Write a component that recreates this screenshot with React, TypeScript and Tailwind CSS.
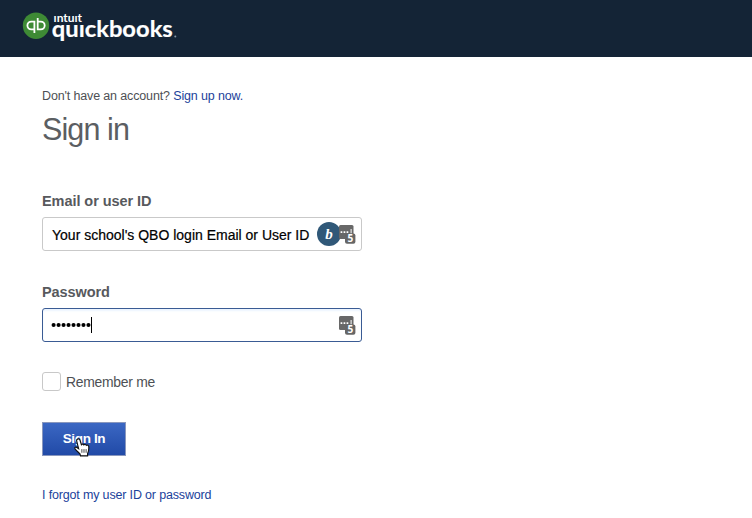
import React from "react";

function Logo() {
  return (
    <svg width="170" height="42" viewBox="0 0 170 42" role="img" aria-label="Intuit QuickBooks" className="shrink-0">
      <circle cx="14" cy="19.7" r="13.2" fill="#3e8a35" />
      <g fill="none" stroke="#fff" strokeWidth="1.8">
        <path d="M12.4 27V15.6H9.3a3.9 3.9 0 0 0 0 7.8h3.1" />
        <path d="M15.7 12V23.4h3.1a3.9 3.9 0 0 0 0-7.8h-3.1" />
      </g>
      <g fill="#fff" fontFamily="Lato, sans-serif" fontWeight="700">
        <text x="31.6" y="16.2" fontSize="11" textLength="28.5" lengthAdjust="spacingAndGlyphs">ıntuıt</text>
        <text x="29.8" y="31.2" fontSize="23.5" textLength="121" lengthAdjust="spacingAndGlyphs" stroke="#fff" strokeWidth=".2">quıckbooks</text>
      </g>
      <circle cx="153.3" cy="30.6" r="1" fill="#8996a5" />
    </svg>
  );
}

function ManagerIcon() {
  return (
    <svg width="18" height="20" viewBox="0 0 18 20" className="shrink-0">
      <rect x="0" y="0" width="14.5" height="14" rx="1.5" fill="#686868" />
      <path d="M1.6 6.2h1.7v1.7H1.6zM4.6 6.2h1.7v1.7H4.6zM7.6 6.2h1.7v1.7H7.6zM11.6 4h1v4.4h-1z" fill="#fff" />
      <rect x="6" y="8.4" width="10.4" height="10.4" rx="2" fill="#666" />
      <text x="11.3" y="17.2" textAnchor="middle" fontSize="10" fontWeight="700" fontFamily="Noto Sans, sans-serif" fill="#fff">5</text>
    </svg>
  );
}

function HandCursor() {
  return (
    <svg width="17" height="20" viewBox="0 0 16 18" preserveAspectRatio="none" className="absolute left-[31px] top-[15px]">
      <path
        d="M3.3 1C4.4.4 5.3 1 5.7 2L7 6c.7-.8 2-.6 2.3.2.8-.7 2-.4 2.3.4 1-.6 2.2 0 2.3 1.2.2 2.5-.1 4.4-1.1 6.1V16H6.1l-.5-1.7C4.1 12.8 2.3 11.5 1 9.7c-.7-1.2.7-2 1.7-1.2l1.6 1.1L2.6 3C2.3 2.1 2.5 1.4 3.3 1z"
        fill="#fff"
        stroke="#111"
        strokeWidth="1.1"
      />
      <path d="M7.4 10v3.3M9.4 10v3.3M11.4 10v3.3" stroke="#111" strokeWidth=".7" />
    </svg>
  );
}

export default function App() {
  return (
    <div className="h-[518px] w-[752px] overflow-hidden bg-white font-['Liberation_Sans',Arial,sans-serif] text-[#4d5054]">
      <header className="flex h-[57px] bg-[#142436] pl-[22px] pt-[6px]">
        <Logo />
      </header>
      <main className="flex flex-col items-start pl-[42px] whitespace-nowrap">
        <p className="mt-[31px] h-4 text-[12.5px] leading-4 tracking-[-0.14px]">
          Don't have an account? <a className="text-[#1b429b]">Sign up now.</a>
        </p>
        <h1 className="mt-[7px] h-9 text-[30.5px] leading-9 tracking-[-0.9px] text-[#5b5e62]">Sign in</h1>
        <label className="mt-[45px] h-[18px] text-[14.5px] font-bold leading-[18px] tracking-[-0.06px] text-[#57595d]">Email or user ID</label>
        <div className="mt-[7px] flex h-[34px] w-[320px] items-center rounded-[3px] border border-[#c9c9c9] pl-[9px] text-[14px] text-black">
          <span className="mt-0.5 w-[265px] [-webkit-text-stroke:0.2px_black]">Your school's QBO login Email or User ID</span>
          <span className="flex h-6 w-6 shrink-0 items-center justify-center rounded-full bg-[#305878] font-['Liberation_Serif',serif] text-[15px] font-bold italic text-white">b</span>
          <span className="-ml-[2px] mt-[2px]"><ManagerIcon /></span>
        </div>
        <label className="mt-[32px] h-[18px] text-[14.5px] font-bold leading-[18px] tracking-[-0.1px] text-[#57595d]">Password</label>
        <div className="mt-[7px] flex h-[34px] w-[320px] items-center rounded-[3px] border border-[#3a5b94] pl-[8px] text-black shadow-[inset_0_2px_2px_#edf5ff]">
          <svg width="40" height="6" viewBox="0 0 40 6" className="shrink-0">
            {Array.from({ length: 8 }, (_, i) => (
              <circle key={i} cx={2.6 + i * 4.98} cy="3" r="2.05" />
            ))}
          </svg>
          <span className="h-4 w-px bg-black" />
          <span className="ml-[247px] mt-[2px]"><ManagerIcon /></span>
        </div>
        <div className="mt-[30px] flex h-[19px] items-center">
          <span className="h-[19px] w-[19px] rounded-[3px] border border-[#c8c8c8]" />
          <span className="ml-[5px] mt-px text-[13.9px] leading-4 tracking-[-0.26px]">Remember me</span>
        </div>
        <button className="relative mt-[31px] h-[34px] w-[84px] border border-[#8997bd] bg-linear-to-b from-[#3b67c3] to-[#214aa7] text-[13.5px] font-bold tracking-[-0.35px] text-white">
          Sign In
          <HandCursor />
        </button>
        <a className="mt-[31px] h-4 text-[12.5px] leading-4 tracking-[-0.16px] text-[#1b429b]">I forgot my user ID or password</a>
      </main>
    </div>
  );
}
